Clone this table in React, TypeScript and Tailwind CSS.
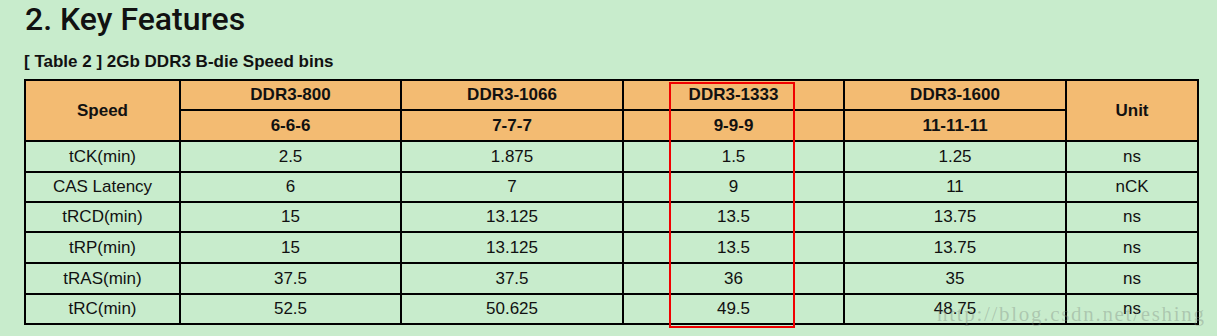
import React from "react";

const cols = ["DDR3-800", "DDR3-1066", "DDR3-1333", "DDR3-1600"];
const timings = ["6-6-6", "7-7-7", "9-9-9", "11-11-11"];
const rows: string[][] = [
  ["tCK(min)", "2.5", "1.875", "1.5", "1.25", "ns"],
  ["CAS Latency", "6", "7", "9", "11", "nCK"],
  ["tRCD(min)", "15", "13.125", "13.5", "13.75", "ns"],
  ["tRP(min)", "15", "13.125", "13.5", "13.75", "ns"],
  ["tRAS(min)", "37.5", "37.5", "36", "35", "ns"],
  ["tRC(min)", "52.5", "50.625", "49.5", "48.75", "ns"],
];

const head = "bg-[#F3BB72] flex items-center justify-center font-bold text-[17px] text-[#111]";
const body = "bg-[#C8ECCC] flex items-center justify-center text-[17px] text-[#111]";

export default function App() {
  return (
    <div
      className="relative w-[1217px] h-[336px] overflow-hidden bg-[#C8ECCC]"
      style={{ fontFamily: '"Liberation Sans", Arial, sans-serif' }}
    >
      <div
        className="pl-[25px] text-[32px] leading-[38px] font-medium text-[#111]"
        style={{ fontFamily: "Roboto, sans-serif" }}
      >
        2. Key Features
      </div>
      <div className="mt-[14px] pl-[24px] text-[17px] leading-[20px] font-bold text-[#111]">
        [ Table 2 ] 2Gb DDR3 B-die Speed bins
      </div>
      <div className="ml-[24px] mt-[7px] grid w-[1175px] gap-[2px] bg-black p-[2px] grid-cols-[153px_219px_220px_219px_220px_130px] grid-rows-[28px_29px_29px_28px_28px_29px_29px_28px]">
        <div className={`${head} row-span-2`}>Speed</div>
        {cols.map((c) => (
          <div key={c} className={head}>
            {c}
          </div>
        ))}
        <div className={`${head} row-span-2`}>Unit</div>
        {timings.map((t) => (
          <div key={t} className={head}>
            {t}
          </div>
        ))}
        {rows.map((r, i) =>
          r.map((cell, j) => (
            <div key={`${i}-${j}`} className={body}>
              {cell}
            </div>
          ))
        )}
      </div>
      <div className="absolute left-[669px] top-[82px] w-[126px] h-[246px] border-2 border-[#F00000]" />
      <div
        className="absolute left-[937px] top-[301px] text-[21px] leading-[26px] tracking-[1.7px] text-[rgba(120,130,122,0.35)] pointer-events-none"
        style={{ fontFamily: '"Liberation Serif", serif' }}
      >
        http://blog.csdn.net/eshing
      </div>
    </div>
  );
}
